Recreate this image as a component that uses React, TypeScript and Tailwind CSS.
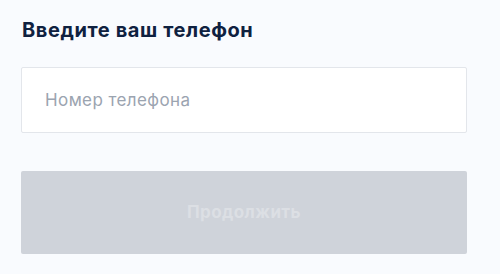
import { useState } from 'react';

export default function App() {
  const [phone, setPhone] = useState('');

  return (
    <div className="min-h-[274px] w-[500px] bg-[#f9fbfe] pl-[21px] pt-[18px] font-['Inter',sans-serif]">
      <h1 className="pl-px text-[20px] font-bold leading-[24px] tracking-[0.6px] text-[#0f2140]">
        Введите ваш телефон
      </h1>

      <input
        type="tel"
        value={phone}
        onChange={(e) => setPhone(e.target.value)}
        placeholder="Номер телефона"
        className="mt-[25px] block h-[66px] w-[446px] rounded-[2px] border border-[#e3e6eb] bg-white px-[23px] text-[17px] tracking-[0.4px] text-[#0f2140] outline-none placeholder:text-[#9ba4b0]"
      />

      <button
        type="button"
        disabled
        className="mt-[38px] flex h-[83px] w-[446px] items-center justify-center rounded-[2px] bg-[#cfd3da] text-[17px] font-bold tracking-[0.4px] text-[#dcdfe4]"
      >
        Продолжить
      </button>
    </div>
  );
}
